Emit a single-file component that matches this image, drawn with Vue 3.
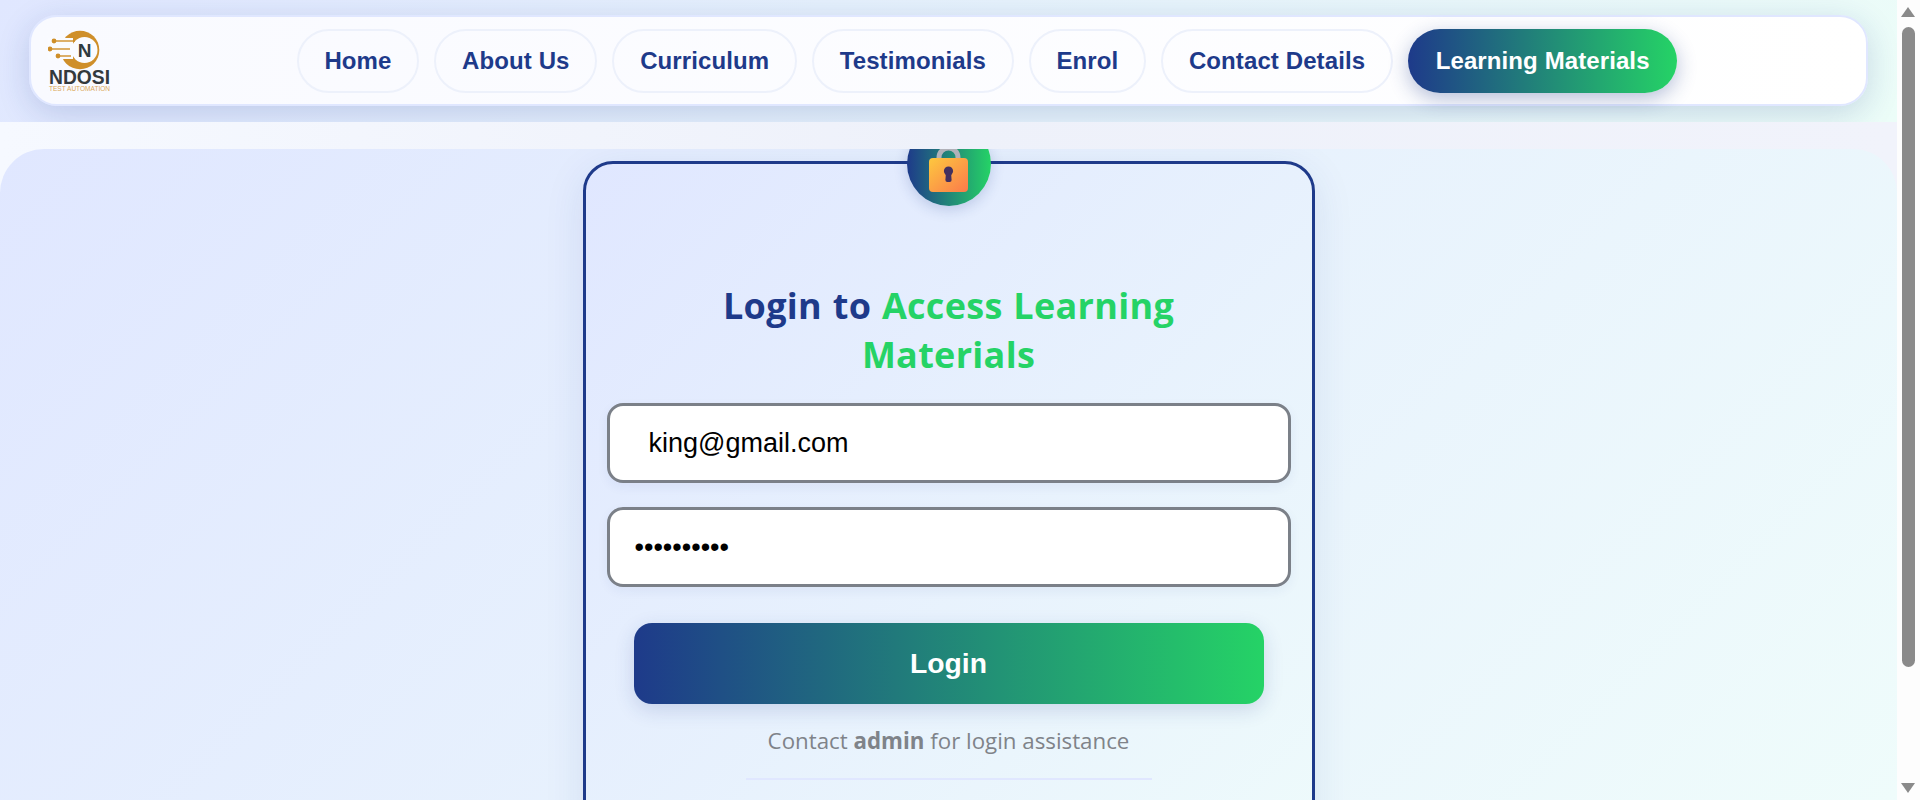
<template>
  <div class="window">
    <div class="page">
      <header class="site-header">
        <div class="nav-card">
          <a class="logo" href="#" aria-label="Ndosi Test Automation">
            <svg width="76" height="64" viewBox="0 0 76 64">
              <circle cx="32" cy="21" r="19.3" fill="#cf8f2a" />
              <circle cx="36.5" cy="21" r="13" fill="#fafbff" />
              <path d="M0 9h25v21H0z" fill="#fafbff" />
              <g stroke="#cf8f2a" stroke-width="1.4" fill="#cf8f2a">
                <path d="M6 12h21" />
                <path d="M2 20h20" />
                <path d="M10 27h13" />
                <circle cx="6" cy="12" r="1.7" />
                <circle cx="2" cy="20" r="1.7" />
                <circle cx="10" cy="27" r="1.7" />
              </g>
              <text x="36.5" y="28" class="logo-n" text-anchor="middle">N</text>
              <text x="1" y="55" class="logo-name" textLength="61" lengthAdjust="spacingAndGlyphs">NDOSI</text>
              <text x="1" y="62" class="logo-sub" textLength="61" lengthAdjust="spacingAndGlyphs">TEST AUTOMATION</text>
            </svg>
          </a>
          <nav class="nav-links">
            <a
              v-for="link in links"
              :key="link"
              href="#"
              class="nav-link"
              :class="{ active: link === activeLink }"
            >
              {{ link }}
            </a>
          </nav>
        </div>
      </header>

      <main class="content">
        <section class="login-card">
          <div class="lock-badge">
            <svg width="46" height="54" viewBox="0 0 46 54">
              <defs>
                <linearGradient id="lockBody" x1="0" y1="0" x2="1" y2="1">
                  <stop offset="0" stop-color="#fdc83f" />
                  <stop offset="1" stop-color="#fb7a4b" />
                </linearGradient>
              </defs>
              <path d="M13 24V18.5a9.5 9.5 0 0 1 19 0V24" fill="none" stroke="#b0b1b9" stroke-width="5" />
              <rect x="3" y="19" width="39" height="34" rx="4" fill="url(#lockBody)" />
              <circle cx="22.5" cy="32" r="4.6" fill="#43305f" />
              <path d="M20 33h5l.6 8a2 2 0 0 1-2 2h-2.2a2 2 0 0 1-2-2z" fill="#43305f" />
            </svg>
          </div>

          <h2 class="login-title">
            Login to <span class="accent">Access Learning Materials</span>
          </h2>

          <form class="login-form" @submit.prevent>
            <input v-model="email" class="field field-email" type="email" />
            <input v-model="password" class="field" type="password" />
            <button type="submit" class="login-button">Login</button>
          </form>

          <p class="help-text">Contact <strong>admin</strong> for login assistance</p>
          <hr class="divider" />
        </section>
      </main>
    </div>

    <aside class="scrollbar" aria-hidden="true">
      <span class="arrow arrow-up"></span>
      <span class="thumb"></span>
      <span class="arrow arrow-down"></span>
    </aside>
  </div>
</template>

<script setup>
import { ref } from 'vue';

const links = [
  'Home',
  'About Us',
  'Curriculum',
  'Testimonials',
  'Enrol',
  'Contact Details',
  'Learning Materials',
];
const activeLink = 'Learning Materials';

const email = ref('king@gmail.com');
const password = ref('1234567890');
</script>

<style>
html,
body {
  margin: 0;
  overflow: hidden;
}
</style>

<style scoped>
.window {
  display: flex;
  height: 800px;
  overflow: hidden;
  font-family: "Liberation Sans", Arial, sans-serif;
}

.page {
  flex: 1;
  min-width: 0;
  background: linear-gradient(90deg, #f6f9ff 0%, #eef1fa 50%, #f1f3fb 100%);
}

.site-header {
  height: 122px;
  box-sizing: border-box;
  padding: 15px 29px 16px;
  overflow: hidden;
  background: linear-gradient(135deg, #e0e7ff 0%, #ecfdf8 100%);
}

.nav-card {
  display: flex;
  align-items: center;
  height: 91px;
  box-sizing: border-box;
  padding: 0 16px 0 17px;
  border: 2px solid #e0e7ff;
  border-radius: 28px;
  background: linear-gradient(90deg, #f9faff 0%, #ffffff 100%);
  box-shadow: 0 8px 32px rgba(30, 58, 138, 0.18);
}

.logo {
  display: block;
  flex: none;
  width: 76px;
  height: 64px;
}

.logo svg {
  display: block;
}

.logo-n {
  font: 700 19px "Liberation Sans", Arial, sans-serif;
  fill: #2f3a40;
}

.logo-name {
  font: 700 19.5px "Liberation Sans", Arial, sans-serif;
  fill: #33393d;
}

.logo-sub {
  font: 400 7.5px "Liberation Sans", Arial, sans-serif;
  fill: #d9a85a;
}

.nav-links {
  flex: 1;
  display: flex;
  justify-content: center;
  gap: 15px;
}

.nav-link {
  display: flex;
  align-items: center;
  height: 64px;
  box-sizing: border-box;
  padding: 0 25.8px;
  border: 2px solid #edf1fb;
  border-radius: 32px;
  color: #1e3a8a;
  font-size: 24px;
  font-weight: 700;
  letter-spacing: 0.1px;
  text-decoration: none;
  white-space: nowrap;
}

.nav-link.active {
  border-color: transparent;
  background: linear-gradient(90deg, #1e3a8a, #25d366) border-box;
  color: #fff;
  box-shadow: 0 6px 20px rgba(30, 58, 138, 0.32);
}

.content {
  height: 651px;
  margin-top: 27px;
  padding-top: 12px;
  box-sizing: border-box;
  overflow: hidden;
  border-radius: 44px 44px 0 0;
  background: linear-gradient(135deg, #e0e7ff 0%, #effcfb 100%);
}

.login-card {
  position: relative;
  width: 732px;
  min-height: 800px;
  margin: 0 auto;
  padding: 117px 21px 0;
  box-sizing: border-box;
  border: 3px solid #1e3a8a;
  border-radius: 30px;
  background: linear-gradient(135deg, #e0e7ff 0%, #effcfb 100%);
  box-shadow: 0 10px 40px rgba(30, 58, 138, 0.1);
}

.lock-badge {
  position: absolute;
  top: -42px;
  left: 50%;
  display: flex;
  justify-content: center;
  width: 84px;
  height: 84px;
  margin-left: -42px;
  border-radius: 50%;
  background: linear-gradient(90deg, #1e3a8a, #25d366);
  box-shadow: 0 4px 14px rgba(30, 58, 138, 0.2);
}

.lock-badge svg {
  flex: none;
  margin-top: 17px;
}

.login-title {
  width: 500px;
  margin: 0 auto 24px;
  color: #1e3a8a;
  font-family: "Open Sans", "Noto Sans", sans-serif;
  font-size: 36px;
  font-weight: 700;
  letter-spacing: 0.3px;
  word-spacing: 1px;
  line-height: 49px;
  text-align: center;
}

.accent {
  color: #25d366;
}

.login-form {
  display: flex;
  flex-direction: column;
  gap: 24px;
}

.field {
  display: block;
  width: 100%;
  height: 80px;
  box-sizing: border-box;
  padding: 0 25px;
  border: 3px solid #7b8088;
  border-radius: 16px;
  background: #fff;
  color: #000;
  font-family: "Liberation Sans", Arial, sans-serif;
  font-size: 27px;
  outline: none;
  box-shadow: 0 4px 12px rgba(30, 58, 138, 0.06);
}

.field-email {
  padding-left: 39px;
}

.login-button {
  display: block;
  width: 630px;
  height: 81px;
  margin: 12px auto 0;
  border: none;
  border-radius: 18px;
  background: linear-gradient(90deg, #1e3a8a, #25d366);
  color: #fff;
  font-family: "Liberation Sans", Arial, sans-serif;
  font-size: 28.3px;
  font-weight: 700;
  box-shadow: 0 6px 20px rgba(30, 58, 138, 0.16);
}

.help-text {
  margin: 20px 0 0;
  color: #7f8389;
  font-family: "Open Sans", "Noto Sans", sans-serif;
  font-size: 22.3px;
  line-height: 34px;
  text-align: center;
}

.help-text strong {
  font-weight: 700;
}

.divider {
  width: 406px;
  height: 2px;
  margin: 20px auto 0;
  border: none;
  background: #e0e7ff;
}

.scrollbar {
  flex: none;
  display: flex;
  flex-direction: column;
  align-items: center;
  width: 23px;
  padding-right: 1px;
  box-sizing: border-box;
  height: 800px;
  background: #fdfdfd;
}

.thumb {
  width: 13px;
  height: 640px;
  margin: 10px 0 116px;
  border-radius: 7px;
  background: #8a8a8a;
}

.arrow {
  width: 0;
  height: 0;
  border-left: 7px solid transparent;
  border-right: 7px solid transparent;
}

.arrow-up {
  margin-top: 7px;
  border-bottom: 10px solid #8a8a8a;
}

.arrow-down {
  border-top: 10px solid #8a8a8a;
}
</style>
